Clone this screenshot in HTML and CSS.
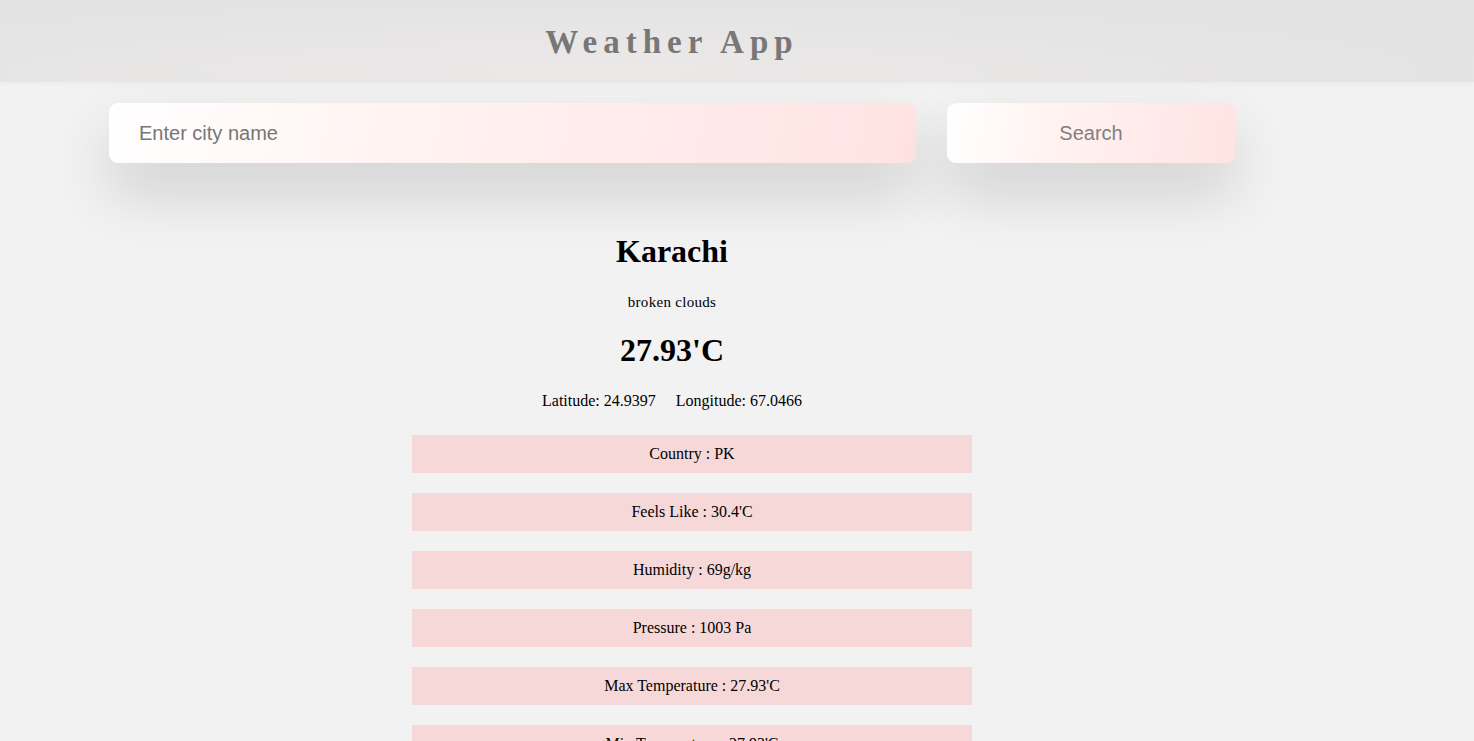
FILE: index.html
```html
<!DOCTYPE html>
<html lang="en">
<head>
<meta charset="utf-8">
<title>Weather App</title>
<link rel="stylesheet" href="styles.css">
</head>
<body>
<header class="topbar">
  <h2 class="title">Weather App</h2>
</header>
<div class="search-row">
  <input class="city-input" type="text" placeholder="Enter city name">
  <button class="search-btn" type="button">Search</button>
</div>
<main class="result">
  <h1 class="city">Karachi</h1>
  <p class="desc">broken clouds</p>
  <h1 class="temp">27.93'C</h1>
  <p class="coords"><span class="coord">Latitude: 24.9397</span><span class="coord">Longitude: 67.0466</span></p>
  <ul class="details">
    <li class="detail">Country : PK</li>
    <li class="detail">Feels Like : 30.4'C</li>
    <li class="detail">Humidity : 69g/kg</li>
    <li class="detail">Pressure : 1003 Pa</li>
    <li class="detail">Max Temperature : 27.93'C</li>
    <li class="detail">Min Temperature : 27.93'C</li>
  </ul>
</main>
</body>
</html>
```
FILE: styles.css
```css
html, body {
  margin: 0;
  padding: 0;
}
body {
  background: #f2f2f2;
  font-family: "Liberation Serif", "Times New Roman", serif;
  color: #000;
  overflow: hidden;
}
.topbar {
  height: 82px;
  background: radial-gradient(ellipse at 40% 90%, #ebe9e8 0%, #e5e4e4 60%, #e3e3e3 100%);
  display: flex;
  align-items: center;
  justify-content: center;
  padding-right: 130px;
  box-shadow: 0 2px 6px rgba(0,0,0,0.03);
}
.title {
  margin: 0;
  font-size: 33px;
  font-weight: bold;
  letter-spacing: 6px;
  color: #777;
  transform: scaleY(1.05);
}
.search-row {
  display: flex;
  gap: 31px;
  padding-left: 109px;
  margin-top: 21px;
}
.city-input,
.search-btn {
  height: 60px;
  border: none;
  border-radius: 9px;
  background: linear-gradient(100deg, #ffffff 0%, #fff2f0 40%, #ffe3e3 100%);
  box-shadow: 0 30px 60px rgba(0,0,0,0.14);
  font-family: "Liberation Sans", Arial, sans-serif;
  font-size: 20px;
  outline: none;
  box-sizing: border-box;
}
.city-input {
  width: 807px;
  padding: 0 30px;
  color: #555;
}
.city-input::placeholder {
  color: #767676;
}
.search-btn {
  width: 288px;
  color: #808080;
  padding-top: 2px;
}
.result {
  width: 1344px;
  text-align: center;
  margin-top: 70px;
}
.city {
  margin: 0;
  font-size: 32px;
  line-height: 37px;
}
.desc {
  margin: 23px 0 0;
  font-size: 15px;
  line-height: 18px;
  letter-spacing: 0.3px;
}
.temp {
  margin: 21px 0 0;
  font-size: 32px;
  line-height: 37px;
}
.coords {
  margin: 22px 0 0;
  font-size: 16px;
  line-height: 19px;
}
.coord + .coord {
  margin-left: 20px;
}
.details {
  list-style: none;
  margin: 25px 0 0;
  padding: 0 0 0 40px;
  display: flex;
  flex-direction: column;
  align-items: center;
  gap: 20px;
}
.detail {
  width: 560px;
  height: 38px;
  line-height: 38px;
  background: #f7d8d9;
  font-size: 16px;
}
```
